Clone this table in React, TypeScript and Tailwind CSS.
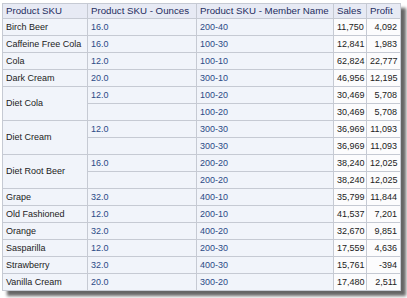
import React from "react";

type Row = {
  sku: string;
  span?: number;
  oz: string;
  member: string;
  sales: string;
  profit: string;
};

const rows: Row[] = [
  { sku: "Birch Beer", oz: "16.0", member: "200-40", sales: "11,750", profit: "4,092" },
  { sku: "Caffeine Free Cola", oz: "16.0", member: "100-30", sales: "12,841", profit: "1,983" },
  { sku: "Cola", oz: "12.0", member: "100-10", sales: "62,824", profit: "22,777" },
  { sku: "Dark Cream", oz: "20.0", member: "300-10", sales: "46,956", profit: "12,195" },
  { sku: "Diet Cola", span: 2, oz: "12.0", member: "100-20", sales: "30,469", profit: "5,708" },
  { sku: "", span: 0, oz: "", member: "100-20", sales: "30,469", profit: "5,708" },
  { sku: "Diet Cream", span: 2, oz: "12.0", member: "300-30", sales: "36,969", profit: "11,093" },
  { sku: "", span: 0, oz: "", member: "300-30", sales: "36,969", profit: "11,093" },
  { sku: "Diet Root Beer", span: 2, oz: "16.0", member: "200-20", sales: "38,240", profit: "12,025" },
  { sku: "", span: 0, oz: "", member: "200-20", sales: "38,240", profit: "12,025" },
  { sku: "Grape", oz: "32.0", member: "400-10", sales: "35,799", profit: "11,844" },
  { sku: "Old Fashioned", oz: "12.0", member: "200-10", sales: "41,537", profit: "7,201" },
  { sku: "Orange", oz: "32.0", member: "400-20", sales: "32,670", profit: "9,851" },
  { sku: "Sasparilla", oz: "12.0", member: "200-30", sales: "17,559", profit: "4,636" },
  { sku: "Strawberry", oz: "32.0", member: "400-30", sales: "15,761", profit: "-394" },
  { sku: "Vanilla Cream", oz: "20.0", member: "300-20", sales: "17,480", profit: "2,511" },
];

const th =
  "h-[15px] border border-[#c6cad3] bg-[#e7eaf4] px-[3px] text-left align-middle text-[9.7px] font-normal leading-none text-[#1f2d5f] whitespace-nowrap overflow-hidden";
const td =
  "h-[17px] border border-[#c6cad3] px-[3px] align-middle text-[9px] leading-none whitespace-nowrap overflow-hidden";

const App = () => {
  return (
    <div className="min-h-screen bg-white pl-[2px] pt-[3px]" style={{ fontFamily: '"Liberation Sans", Arial, sans-serif' }}>
      <table className="table-fixed w-[398px] border-collapse border border-[#9ea2ab] shadow-[5px_5px_3px_rgba(0,0,0,0.6)]">
        <colgroup>
          <col className="w-[85px]" />
          <col className="w-[109px]" />
          <col className="w-[137px]" />
          <col className="w-[33px]" />
          <col className="w-[34px]" />
        </colgroup>
        <thead>
          <tr>
            <th className={th}>Product SKU</th>
            <th className={th}>Product SKU - Ounces</th>
            <th className={th}>Product SKU - Member Name</th>
            <th className={th}>Sales</th>
            <th className={th}>Profit</th>
          </tr>
        </thead>
        <tbody>
          {rows.map((r, i) => (
            <tr key={i}>
              {r.span !== 0 && (
                <td rowSpan={r.span ?? 1} className={`${td} bg-[#f1f4fa] text-[#222]`}>
                  {r.sku}
                </td>
              )}
              <td className={`${td} bg-[#f1f4fa] text-[#2c4a86]`}>{r.oz}</td>
              <td className={`${td} bg-[#f1f4fa] text-[#2c4a86]`}>{r.member}</td>
              <td className={`${td} bg-[#fcfcfd] text-right text-[#222]`}>{r.sales}</td>
              <td className={`${td} bg-[#fcfcfd] text-right text-[#222]`}>{r.profit}</td>
            </tr>
          ))}
        </tbody>
      </table>
    </div>
  );
};

export default App;
